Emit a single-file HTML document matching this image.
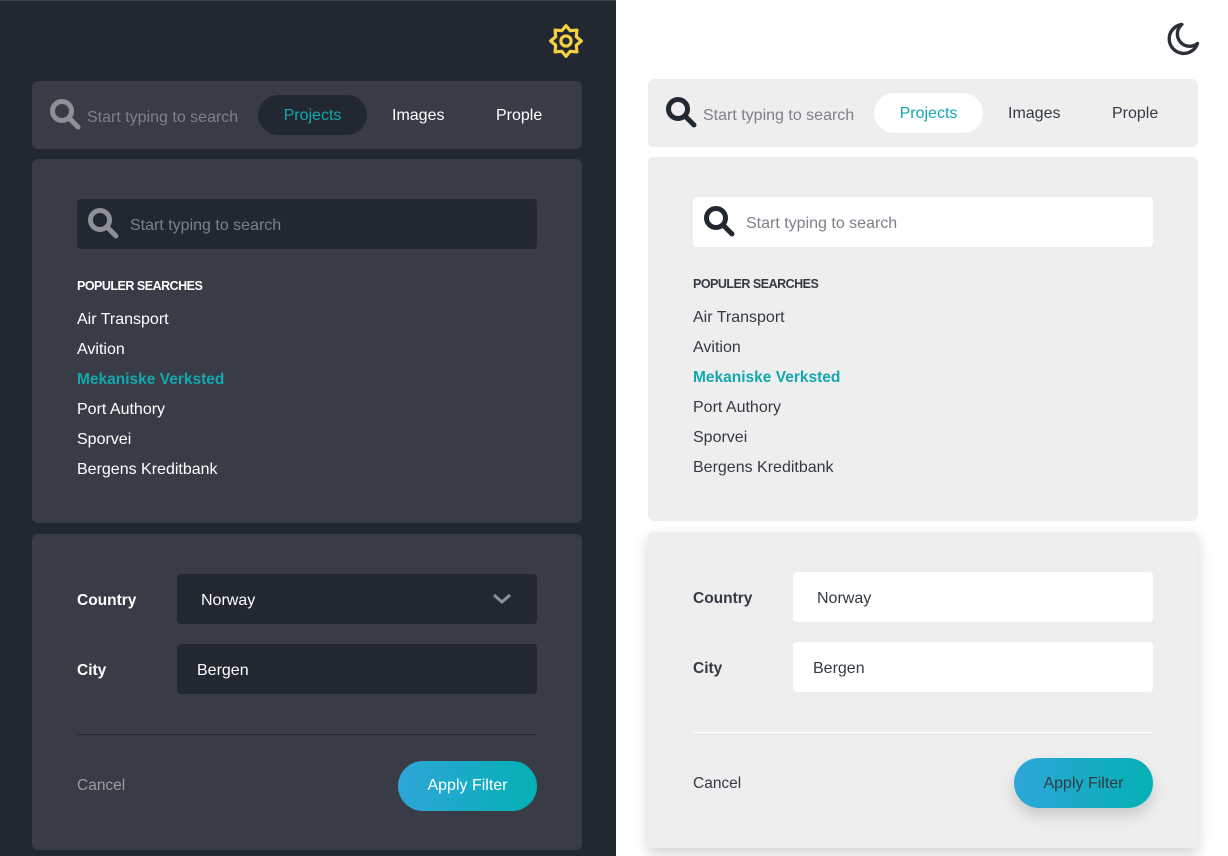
<!DOCTYPE html>
<html><head><meta charset="utf-8">
<style>
*{margin:0;padding:0;box-sizing:border-box}
body{width:1228px;height:856px;position:relative;overflow:hidden;background:#fff;font-family:"Liberation Sans",sans-serif}
.a{position:absolute}
.t{position:absolute;white-space:nowrap;line-height:20px;margin-top:2px}
.l{font-size:16px}
.tab{font-size:16px}
</style></head><body>
<!-- dark side -->
<div class="a" style="left:0;top:0;width:616px;height:856px;background:#222831;border-top:1px solid #3a3d44"></div>
<svg class="a" style="left:548px;top:23px" width="36" height="36" viewBox="0 0 34 34">
<path d="M17 2.5 L21 7.3 L27.3 6.7 L26.7 13 L31.5 17 L26.7 21 L27.3 27.3 L21 26.7 L17 31.5 L13 26.7 L6.7 27.3 L7.3 21 L2.5 17 L7.3 13 L6.7 6.7 L13 7.3 Z" fill="none" stroke="#f5d142" stroke-width="3" stroke-linejoin="round"/>
<circle cx="17" cy="17" r="4.8" fill="none" stroke="#f5d142" stroke-width="3"/></svg>

<div class="a" style="left:32px;top:81px;width:550px;height:68px;background:#393c46;border-radius:6px"></div>
<svg class="a" style="left:49px;top:97px" width="34" height="34" viewBox="0 0 34 34"><circle cx="13" cy="14" r="9.5" fill="none" stroke="#8d9096" stroke-width="5"/><path d="M20 21 L29 30" stroke="#8d9096" stroke-width="5" stroke-linecap="round"/></svg>
<div class="t" style="left:87px;top:106px;font-size:16px;color:#7d8088">Start typing to search</div>
<div class="a" style="left:258px;top:95px;width:109px;height:40px;border-radius:20px;background:#222831"></div>
<div class="t tab" style="left:258px;top:104px;width:109px;text-align:center;color:#13a8ae">Projects</div>
<div class="t tab" style="left:392px;top:104px;color:#fff">Images</div>
<div class="t tab" style="left:496px;top:104px;color:#fff">Prople</div>

<div class="a" style="left:32px;top:159px;width:550px;height:364px;background:#393c46;border-radius:6px"></div>
<div class="a" style="left:77px;top:199px;width:460px;height:50px;background:#222831;border-radius:4px"></div>
<svg class="a" style="left:87px;top:206px" width="34" height="34" viewBox="0 0 34 34"><circle cx="13" cy="14" r="9.5" fill="none" stroke="#8d9096" stroke-width="5"/><path d="M20 21 L29 30" stroke="#8d9096" stroke-width="5" stroke-linecap="round"/></svg>
<div class="t" style="left:130px;top:214px;font-size:16px;color:#7d8088">Start typing to search</div>
<div class="t" style="left:77px;top:274px;font-size:12.5px;font-weight:bold;color:#fff;letter-spacing:-0.5px">POPULER SEARCHES</div>
<div class="t l" style="left:77px;top:308px;color:#fff">Air Transport</div>
<div class="t l" style="left:77px;top:338px;color:#fff">Avition</div>
<div class="t l" style="left:77px;top:368px;color:#13a8ae;font-weight:bold;font-size:15.5px">Mekaniske Verksted</div>
<div class="t l" style="left:77px;top:398px;color:#fff">Port Authory</div>
<div class="t l" style="left:77px;top:428px;color:#fff">Sporvei</div>
<div class="t l" style="left:77px;top:458px;color:#fff">Bergens Kreditbank</div>

<div class="a" style="left:32px;top:534px;width:550px;height:316px;background:#393c46;border-radius:6px"></div>
<div class="t" style="left:77px;top:589px;font-size:15.5px;font-weight:bold;color:#fff">Country</div>
<div class="a" style="left:177px;top:574px;width:360px;height:50px;background:#222831;border-radius:4px"></div>
<div class="t" style="left:201px;top:589px;font-size:16px;color:#fff">Norway</div>
<svg class="a" style="left:492px;top:592px" width="20" height="13" viewBox="0 0 20 13"><path d="M2 3 L10 10 L18 3" fill="none" stroke="#8d9096" stroke-width="3"/></svg>
<div class="t" style="left:77px;top:659px;font-size:15.5px;font-weight:bold;color:#fff">City</div>
<div class="a" style="left:177px;top:644px;width:360px;height:50px;background:#222831;border-radius:4px"></div>
<div class="t" style="left:197px;top:659px;font-size:16px;color:#fff">Bergen</div>
<div class="a" style="left:77px;top:734px;width:460px;height:1px;background:#23262e"></div>
<div class="t" style="left:77px;top:774px;font-size:15.5px;color:#9a9ca2">Cancel</div>
<div class="a" style="left:398px;top:761px;width:139px;height:50px;border-radius:25px;background:linear-gradient(90deg,#2ea6d8,#04b0b4)"></div>
<div class="t" style="left:398px;top:774px;width:139px;text-align:center;font-size:16px;color:#fff">Apply Filter</div>

<!-- light side -->
<svg class="a" style="left:1164px;top:20px" width="38" height="38" viewBox="0 0 34 34"><path d="M16 4 A13 13 0 1 0 30 21 A10 10 0 0 1 16 4 Z" fill="none" stroke="#2b2f38" stroke-width="3" stroke-linejoin="round"/></svg>

<div class="a" style="left:648px;top:79px;width:550px;height:68px;background:#eeeeee;border-radius:6px"></div>
<svg class="a" style="left:665px;top:95px" width="34" height="34" viewBox="0 0 34 34"><circle cx="13" cy="14" r="9.5" fill="none" stroke="#222831" stroke-width="5"/><path d="M20 21 L29 30" stroke="#222831" stroke-width="5" stroke-linecap="round"/></svg>
<div class="t" style="left:703px;top:104px;font-size:16px;color:#7d8088">Start typing to search</div>
<div class="a" style="left:874px;top:93px;width:109px;height:40px;border-radius:20px;background:#fff"></div>
<div class="t tab" style="left:874px;top:102px;width:109px;text-align:center;color:#13a8ae">Projects</div>
<div class="t tab" style="left:1008px;top:102px;color:#333a44">Images</div>
<div class="t tab" style="left:1112px;top:102px;color:#333a44">Prople</div>

<div class="a" style="left:648px;top:157px;width:550px;height:364px;background:#eeeeee;border-radius:6px"></div>
<div class="a" style="left:693px;top:197px;width:460px;height:50px;background:#fff;border-radius:4px"></div>
<svg class="a" style="left:703px;top:204px" width="34" height="34" viewBox="0 0 34 34"><circle cx="13" cy="14" r="9.5" fill="none" stroke="#222831" stroke-width="5"/><path d="M20 21 L29 30" stroke="#222831" stroke-width="5" stroke-linecap="round"/></svg>
<div class="t" style="left:746px;top:212px;font-size:16px;color:#7d8088">Start typing to search</div>
<div class="t" style="left:693px;top:272px;font-size:12.5px;font-weight:bold;color:#333a44;letter-spacing:-0.5px">POPULER SEARCHES</div>
<div class="t l" style="left:693px;top:306px;color:#333a44">Air Transport</div>
<div class="t l" style="left:693px;top:336px;color:#333a44">Avition</div>
<div class="t l" style="left:693px;top:366px;color:#13a8ae;font-weight:bold;font-size:15.5px">Mekaniske Verksted</div>
<div class="t l" style="left:693px;top:396px;color:#333a44">Port Authory</div>
<div class="t l" style="left:693px;top:426px;color:#333a44">Sporvei</div>
<div class="t l" style="left:693px;top:456px;color:#333a44">Bergens Kreditbank</div>

<div class="a" style="left:648px;top:532px;width:550px;height:316px;background:#eeeeee;border-radius:6px;box-shadow:0 6px 14px rgba(0,0,0,0.18)"></div>
<div class="t" style="left:693px;top:587px;font-size:15.5px;font-weight:bold;color:#333a44">Country</div>
<div class="a" style="left:793px;top:572px;width:360px;height:50px;background:#fff;border-radius:4px"></div>
<div class="t" style="left:817px;top:587px;font-size:16px;color:#333a44">Norway</div>
<div class="t" style="left:693px;top:657px;font-size:15.5px;font-weight:bold;color:#333a44">City</div>
<div class="a" style="left:793px;top:642px;width:360px;height:50px;background:#fff;border-radius:4px"></div>
<div class="t" style="left:813px;top:657px;font-size:16px;color:#333a44">Bergen</div>
<div class="a" style="left:693px;top:732px;width:460px;height:1px;background:#fff"></div>
<div class="t" style="left:693px;top:772px;font-size:15.5px;color:#333a44">Cancel</div>
<div class="a" style="left:1014px;top:758px;width:139px;height:50px;border-radius:25px;background:linear-gradient(90deg,#2ea6d8,#04b0b4);box-shadow:0 8px 14px rgba(0,0,0,0.15)"></div>
<div class="t" style="left:1014px;top:772px;width:139px;text-align:center;font-size:16px;color:#333a44">Apply Filter</div>
</body></html>
